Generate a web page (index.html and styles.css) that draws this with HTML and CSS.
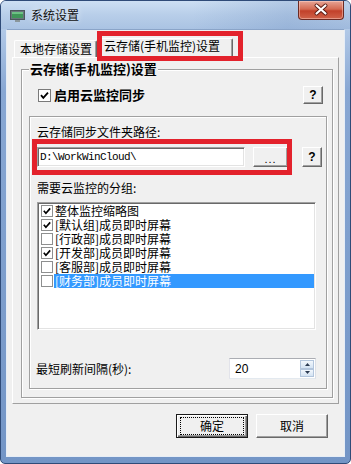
FILE: index.html
```html
<!DOCTYPE html>
<html>
<head>
<meta charset="utf-8">
<link rel="stylesheet" href="styles.css">
</head>
<body>
<div class="window">
  <div class="titlebar">
    <svg class="appicon" width="15" height="12" viewBox="0 0 15 12">
      <rect x="0.5" y="0.5" width="14" height="9" fill="#68767b" stroke="#4b575b"/>
      <rect x="2" y="2" width="11" height="6" fill="#3f9658"/>
      <rect x="2" y="2" width="11" height="2" fill="#6cc183"/>
      <rect x="5" y="10" width="5" height="2" fill="#8a969b"/>
    </svg>
    <span class="title">系统设置</span>
    <div class="close">
      <svg width="46" height="19" viewBox="0 0 46 19">
        <path d="M18.5 5.5 L27.5 13.5 M27.5 5.5 L18.5 13.5" stroke="#5a1a12" stroke-width="4" stroke-linecap="round"/>
        <path d="M18.5 5.5 L27.5 13.5 M27.5 5.5 L18.5 13.5" stroke="#ffffff" stroke-width="2.2" stroke-linecap="round"/>
      </svg>
    </div>
  </div>
  <div class="client">
    <div class="pagecontrol">
      <div class="tabs">
        <div class="tab tab-local">本地存储设置</div>
        <div class="tab tab-cloud">云存储(手机监控)设置</div>
      </div>
      <div class="page">
        <fieldset class="group">
          <legend>云存储(手机监控)设置</legend>
          <div class="enable-row">
            <span class="chk on">
              <svg width="11" height="11" viewBox="0 0 11 11"><path d="M2 5.2 L4.3 7.8 L9 2.6" fill="none" stroke="#000" stroke-width="1.8"/></svg>
            </span>
            <span class="bold-label">启用云监控同步</span>
            <div class="btn help">?</div>
          </div>
          <div class="panel">
            <div class="label">云存储同步文件夹路径:</div>
            <div class="path-row">
              <div class="edit path">D:\WorkWinCloud\</div>
              <div class="btn browse">...</div>
              <div class="btn help">?</div>
            </div>
            <div class="label label-groups">需要云监控的分组:</div>
            <div class="listbox">
              <div class="item"><span class="lchk"><svg width="10" height="10" viewBox="0 0 10 10"><path d="M1.8 4.8 L3.9 7.2 L8.2 2.4" fill="none" stroke="#000" stroke-width="1.7"/></svg></span><span class="itext">整体监控缩略图</span></div>
              <div class="item"><span class="lchk"><svg width="10" height="10" viewBox="0 0 10 10"><path d="M1.8 4.8 L3.9 7.2 L8.2 2.4" fill="none" stroke="#000" stroke-width="1.7"/></svg></span><span class="itext">[默认组]成员即时屏幕</span></div>
              <div class="item"><span class="lchk"></span><span class="itext">[行政部]成员即时屏幕</span></div>
              <div class="item"><span class="lchk"><svg width="10" height="10" viewBox="0 0 10 10"><path d="M1.8 4.8 L3.9 7.2 L8.2 2.4" fill="none" stroke="#000" stroke-width="1.7"/></svg></span><span class="itext">[开发部]成员即时屏幕</span></div>
              <div class="item"><span class="lchk"></span><span class="itext">[客服部]成员即时屏幕</span></div>
              <div class="item"><span class="lchk"></span><span class="itext selected">[财务部]成员即时屏幕</span></div>
            </div>
            <div class="spin-row">
              <span class="label">最短刷新间隔(秒):</span>
              <div class="spin">
                <span class="spin-value">20</span>
                <div class="spinbtns">
                  <div class="spinbtn"><svg width="5" height="3" viewBox="0 0 5 3"><path d="M0 3 L2.5 0 L5 3Z" fill="#2b3b52"/></svg></div>
                  <div class="spinbtn"><svg width="5" height="3" viewBox="0 0 5 3"><path d="M0 0 L2.5 3 L5 0Z" fill="#2b3b52"/></svg></div>
                </div>
              </div>
            </div>
          </div>
        </fieldset>
      </div>
    </div>
    <div class="buttons">
      <div class="btn dlg default"><span class="focus">确定</span></div>
      <div class="btn dlg">取消</div>
    </div>
  </div>
  <div class="redmark tabmark"></div>
  <div class="redmark pathmark"></div>
</div>
</body>
</html>
```

FILE: styles.css
```css
* { box-sizing: border-box; }

body {
  margin: 0;
  background: #ffffff;
  font-family: "Noto Sans CJK SC", "Noto Sans", sans-serif;
  font-size: 12px;
  color: #000;
}

.window {
  position: relative;
  width: 351px;
  height: 464px;
  display: flex;
  flex-direction: column;
  border: 1px solid #2f4b78;
  border-radius: 6px 6px 5px 5px;
  overflow: hidden;
  background: linear-gradient(#c6d8ef 0, #b2c9e7 28px, #88a7d3 90px, #7395c6 100%);
}

.titlebar {
  height: 28px;
  flex: none;
  display: flex;
  align-items: center;
  padding-left: 9px;
  background:
    linear-gradient(to right, rgba(255,255,255,0) 55%, rgba(70,110,170,0.18) 82%, rgba(70,110,170,0.1) 100%),
    linear-gradient(#cddff3, #b8cee9 50%, #aac3e3);
}

.appicon { flex: none; margin-top: 1px; }

.title {
  margin-left: 6px;
  font-size: 12px;
  line-height: 14px;
  color: #101010;
  text-shadow: 0 0 6px rgba(255,255,255,0.9);
}

.close {
  margin-left: auto;
  margin-right: 6px;
  align-self: flex-start;
  width: 46px;
  height: 19px;
  border: 1px solid #6c2a22;
  border-top: none;
  border-radius: 0 0 4px 4px;
  background: linear-gradient(#e7a596 0%, #d46a52 45%, #c2412a 55%, #d0634a 100%);
  box-shadow: inset 0 0 0 1px rgba(255,220,210,0.45);
}
.close svg { display: block; margin: -1px 0 0 -1px; }

.client {
  flex: 1;
  margin: 0 5px 6px 5px;
  background: #f0f0f0;
  border: 1px solid #e6edf6;
  border-top-color: #8aa4c8;
  display: flex;
  flex-direction: column;
}

.pagecontrol {
  margin: 8px 5px 0 5px;
}

.tabs {
  position: relative;
  z-index: 1;
  height: 19px;
  display: flex;
  align-items: flex-end;
  padding-left: 2px;
}

.tab {
  height: 17px;
  border: 1px solid #fff;
  border-right-color: #696969;
  border-bottom: none;
  border-radius: 2px 2px 0 0;
  box-shadow: inset -1px 0 0 #a0a0a0;
  background: #f0f0f0;
  line-height: 15px;
  white-space: nowrap;
}
.tab-local { width: 83px; padding-left: 5px; }
.tab-cloud {
  width: 135px;
  height: 20px;
  margin-left: 1px;
  margin-bottom: -1px;
  padding-left: 5px;
  line-height: 14px;
}

.page {
  border: 1px solid #fff;
  border-right-color: #a0a0a0;
  border-bottom-color: #a0a0a0;
  padding: 4px 5px 5px 8px;
}

.group {
  margin: 0;
  min-width: 0;
  border: 1px solid #a0a0a0;
  box-shadow: inset 1px 1px 0 #fff, 1px 1px 0 #fff;
  padding: 10px 5px 8px 7px;
}

.group legend {
  padding: 0 1px;
  font-weight: bold;
  font-size: 13px;
  line-height: 14px;
  background: #f0f0f0;
}

.enable-row {
  display: flex;
  align-items: center;
  height: 18px;
  margin: 0 4px 0 9px;
}

.chk {
  width: 13px;
  height: 13px;
  flex: none;
  border: 1px solid #7a7a7a;
  background: #fff;
  display: flex;
  align-items: center;
  justify-content: center;
}

.bold-label {
  margin-left: 3px;
  font-weight: bold;
  font-size: 13px;
  line-height: 14px;
}

.btn {
  background: #f0f0f0;
  border: 1px solid #fff;
  border-right-color: #696969;
  border-bottom-color: #696969;
  box-shadow: inset -1px -1px 0 #a0a0a0;
  display: flex;
  align-items: center;
  justify-content: center;
  flex: none;
}

.help {
  margin-left: auto;
  width: 20px;
  height: 18px;
  font-family: "Liberation Sans", sans-serif;
  font-weight: bold;
  font-size: 12px;
}

.panel {
  margin-top: 12px;
  border: 1px solid #a0a0a0;
  box-shadow: inset 1px 1px 0 #fff, 1px 1px 0 #fff;
  padding: 8px 4px 9px 7px;
}

.label {
  line-height: 14px;
  white-space: nowrap;
}

.path-row {
  margin-top: 8px;
  height: 20px;
  display: flex;
  align-items: center;
}

.edit {
  background: #fff;
  border: 1px solid #a0a0a0;
  border-right-color: #fff;
  border-bottom-color: #fff;
  box-shadow: inset 1px 1px 0 #696969, inset -1px -1px 0 #e3e3e3;
}

.path {
  width: 208px;
  height: 20px;
  padding-left: 2px;
  font-family: "Liberation Mono", monospace;
  font-size: 11px;
  letter-spacing: -0.6px;
  line-height: 18px;
}

.browse {
  margin-left: 8px;
  width: 35px;
  height: 20px;
  font-family: "Liberation Sans", sans-serif;
  font-size: 11px;
  padding-top: 3px;
  letter-spacing: 1px;
}

.path-row .help { height: 20px; }

.label-groups { margin-top: 14px; }

.listbox {
  margin-top: 7px;
  margin-right: 6px;
  height: 128px;
  background: #fff;
  border: 1px solid #a0a0a0;
  border-right-color: #fff;
  border-bottom-color: #fff;
  box-shadow: inset 1px 1px 0 #696969, inset -1px -1px 0 #e3e3e3;
  padding: 1px 1px 0 3px;
}

.item {
  height: 14px;
  display: flex;
  align-items: center;
}

.lchk {
  width: 12px;
  height: 12px;
  flex: none;
  border: 1px solid #8e8f8f;
  background: #fff;
  display: flex;
  align-items: center;
  justify-content: center;
}

.itext {
  flex: 1;
  margin-left: 1px;
  padding-left: 1px;
  height: 14px;
  line-height: 14px;
  white-space: nowrap;
}

.itext.selected {
  background: #3399ff;
  color: #fff;
}

.spin-row {
  margin-top: 28px;
  height: 21px;
  display: flex;
  align-items: center;
  margin-left: -1px;
}

.spin {
  margin-left: auto;
  margin-right: 6px;
  width: 87px;
  height: 21px;
  background: #fff;
  border: 1px solid #abadb3;
  border-left-color: #e2e3ea;
  border-right-color: #dbdfe6;
  border-bottom-color: #e3e9ef;
  display: flex;
  align-items: center;
}

.spin-value {
  padding-left: 5px;
  font-family: "Liberation Sans", sans-serif;
  font-size: 12px;
}

.spinbtns {
  margin-left: auto;
  margin-right: 1px;
  width: 14px;
  height: 17px;
  display: flex;
  flex-direction: column;
}

.spinbtn {
  flex: 1;
  border: 1px solid #b2c5dc;
  background: linear-gradient(#f2f7fc, #d4e3f3);
  display: flex;
  align-items: center;
  justify-content: center;
}

.buttons {
  margin-top: 10px;
  display: flex;
  justify-content: flex-end;
  gap: 8px;
  padding-right: 16px;
}

.dlg {
  width: 72px;
  height: 24px;
  line-height: 14px;
}

.default {
  border: 1px solid #1a1a1a;
  box-shadow: inset 1px 1px 0 #fff, inset -1px -1px 0 #696969, inset -2px -2px 0 #a0a0a0;
}

.focus {
  flex: 1;
  align-self: stretch;
  margin: 2px 3px;
  border: 1px dotted #000;
  display: flex;
  align-items: center;
  justify-content: center;
}

.redmark {
  position: absolute;
  z-index: 5;
  border: 5px solid #e3222c;
  pointer-events: none;
}

.tabmark {
  left: 96px;
  top: 30px;
  width: 146px;
  height: 30px;
}

.pathmark {
  left: 31px;
  top: 138px;
  width: 260px;
  height: 36px;
}
```
